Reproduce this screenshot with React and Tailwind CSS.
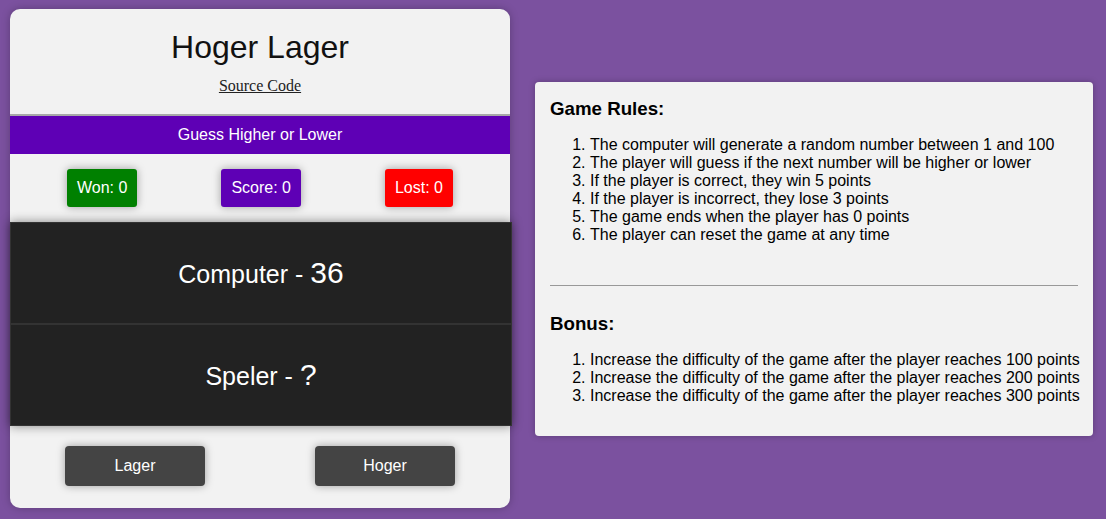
export default function App() {
  const rules = [
    "The computer will generate a random number between 1 and 100",
    "The player will guess if the next number will be higher or lower",
    "If the player is correct, they win 5 points",
    "If the player is incorrect, they lose 3 points",
    "The game ends when the player has 0 points",
    "The player can reset the game at any time",
  ];

  const bonus = [
    "Increase the difficulty of the game after the player reaches 100 points",
    "Increase the difficulty of the game after the player reaches 200 points",
    "Increase the difficulty of the game after the player reaches 300 points",
  ];

  return (
    <main className="min-h-screen bg-[#7b519f] font-['Liberation_Sans',Arial,sans-serif] flex items-center gap-[25px] px-[10px] pt-[9px] pb-[11px]">
      {/* GAME */}
      <section className="w-[500px] shrink-0 bg-[#f2f2f2] rounded-[10px] shadow-[0_0_8px_rgba(0,0,0,0.25)]">
        <div className="pt-[20px] pb-[19px] text-center">
          <h1 className="text-[32px] leading-[normal] text-[#111]">Hoger Lager</h1>
          <a
            href="#"
            className="block w-fit mx-auto mt-[11px] font-['Liberation_Serif','Times_New_Roman',serif] text-[16px] leading-[normal] text-[#222] underline"
          >
            Source Code
          </a>
        </div>

        <div className="h-[2px] bg-[#a8a8a8]" />

        <div className="bg-[#5e00b5] text-white text-[16px] leading-[normal] text-center py-[10px]">
          Guess Higher or Lower
        </div>

        {/* STATS */}
        <div className="flex justify-around px-[15px] py-[15px] text-white text-[16px] leading-[normal]">
          <span className="bg-[#008000] p-[10px] rounded-[3px] shadow-[0_0_8px_rgba(0,0,0,0.35)]">Won: 0</span>
          <span className="bg-[#5e00b5] p-[10px] rounded-[3px] shadow-[0_0_8px_rgba(0,0,0,0.35)]">Score: 0</span>
          <span className="bg-[#ff0000] p-[10px] rounded-[3px] shadow-[0_0_8px_rgba(0,0,0,0.35)]">Lost: 0</span>
        </div>

        {/* NUMBERS */}
        <div className="w-[502px] shadow-[0_0_10px_rgba(0,0,0,0.45)] text-white">
          <div className="h-[102px] bg-[#222] border border-[#333] flex items-center justify-center">
            <span className="text-[25px] leading-[normal]">
              Computer - <span className="text-[30px]">36</span>
            </span>
          </div>
          <div className="h-[102px] bg-[#222] border border-[#333] flex items-center justify-center">
            <span className="text-[25px] leading-[normal]">
              Speler - <span className="text-[30px]">?</span>
            </span>
          </div>
        </div>

        {/* BUTTONS */}
        <div className="flex justify-around pt-[20px] pb-[22px]">
          <button className="w-[140px] h-[40px] bg-[#444] text-white text-[16px] rounded-[4px] shadow-[0_0_8px_rgba(0,0,0,0.35)]">
            Lager
          </button>
          <button className="w-[140px] h-[40px] bg-[#444] text-white text-[16px] rounded-[4px] shadow-[0_0_8px_rgba(0,0,0,0.35)]">
            Hoger
          </button>
        </div>
      </section>

      {/* RULES */}
      <section className="w-[558px] shrink-0 bg-[#f2f2f2] rounded-[4px] shadow-[0_0_6px_rgba(0,0,0,0.25)] px-[15px] pt-[16px] pb-[31px] text-black">
        <h3 className="text-[18.72px] font-bold leading-[normal]">Game Rules:</h3>
        <ol className="list-decimal pl-10 mt-4 text-[16px] leading-[normal] whitespace-nowrap">
          {rules.map((r) => (
            <li key={r}>{r}</li>
          ))}
        </ol>

        <hr className="mt-[41px] border-t border-[#999]" />

        <h3 className="mt-[27px] text-[18.72px] font-bold leading-[normal]">Bonus:</h3>
        <ol className="list-decimal pl-10 mt-4 text-[16px] leading-[normal] whitespace-nowrap">
          {bonus.map((b) => (
            <li key={b}>{b}</li>
          ))}
        </ol>
      </section>
    </main>
  );
}
